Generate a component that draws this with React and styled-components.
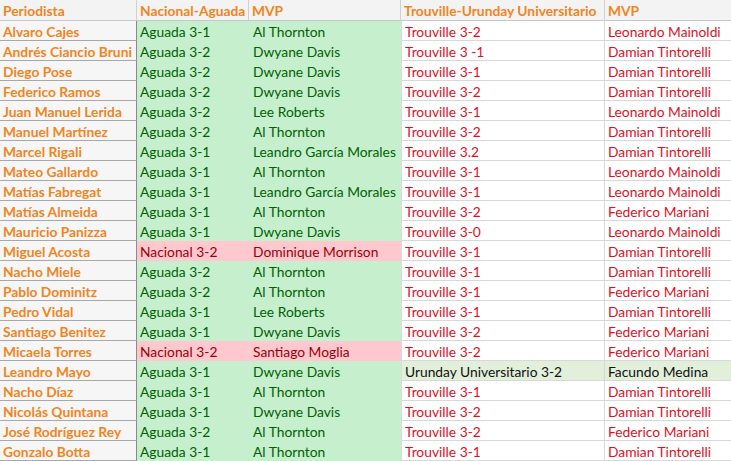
import styled, { createGlobalStyle } from 'styled-components';

const GlobalStyle = createGlobalStyle`
  html, body {
    margin: 0;
    padding: 0;
    background: #ffffff;
  }
  body {
    font-family: Lato, 'Open Sans', 'Liberation Sans', sans-serif;
  }
`;

const Sheet = styled.div`
  display: grid;
  grid-template-columns: 137px 112px 152px 204px 126px;
  grid-template-rows: 21px;
  grid-auto-rows: 20px;
  width: 731px;
  font-size: 13.8px;
`;

const Cell = styled.div`
  display: flex;
  align-items: center;
  padding-left: ${(props) => props.$pad || 3}px;
  padding-top: 1px;
  white-space: nowrap;
  overflow: hidden;
  box-sizing: border-box;
`;

const HeadCell = styled(Cell)`
  background: #f3f3f3;
  color: #f2841c;
  font-weight: 700;
  border-bottom: 1px solid #c8c8c8;
  border-right: ${(props) => (props.$last ? 'none' : '1px solid #d0d0d0')};
`;

const NameCell = styled(Cell)`
  background: #f6f6f6;
  color: #f2841c;
  font-weight: 700;
  border-bottom: 1px solid #a8a8a8;
  border-right: 1px solid #8a8a8a;
`;

const ResultCell = styled(Cell)`
  background: ${(props) => (props.$lost ? '#ffc7ce' : '#c6efce')};
  color: ${(props) => (props.$lost ? '#9c0006' : '#006100')};
`;

const TrouCell = styled(Cell)`
  background: ${(props) => (props.$win ? '#e2efda' : '#ffffff')};
  color: ${(props) => (props.$win ? '#111111' : '#e0101e')};
  border-bottom: 1px solid #d8d8d8;
  border-left: ${(props) => (props.$first ? '1px solid #dadada' : 'none')};
  border-right: ${(props) => (props.$first ? '1px solid #d8d8d8' : 'none')};
`;

const rows = [
  ['Alvaro Cajes', 'Aguada 3-1', 'Al Thornton', 'Trouville 3-2', 'Leonardo Mainoldi'],
  ['Andrés Ciancio Bruni', 'Aguada 3-2', 'Dwyane Davis', 'Trouville 3 -1', 'Damian Tintorelli'],
  ['Diego Pose', 'Aguada 3-2', 'Dwyane Davis', 'Trouville 3-1', 'Damian Tintorelli'],
  ['Federico Ramos', 'Aguada 3-2', 'Dwyane Davis', 'Trouville 3-2', 'Damian Tintorelli'],
  ['Juan Manuel Lerida', 'Aguada 3-2', 'Lee Roberts', 'Trouville 3-1', 'Leonardo Mainoldi'],
  ['Manuel Martínez', 'Aguada 3-2', 'Al Thornton', 'Trouville 3-2', 'Damian Tintorelli'],
  ['Marcel Rigali', 'Aguada 3-1', 'Leandro García Morales', 'Trouville 3.2', 'Damian Tintorelli'],
  ['Mateo Gallardo', 'Aguada 3-1', 'Al Thornton', 'Trouville 3-1', 'Leonardo Mainoldi'],
  ['Matías Fabregat', 'Aguada 3-1', 'Leandro García Morales', 'Trouville 3-1', 'Leonardo Mainoldi'],
  ['Matías Almeida', 'Aguada 3-1', 'Al Thornton', 'Trouville 3-2', 'Federico Mariani'],
  ['Mauricio Panizza', 'Aguada 3-1', 'Dwyane Davis', 'Trouville 3-0', 'Leonardo Mainoldi'],
  ['Miguel Acosta', 'Nacional 3-2', 'Dominique Morrison', 'Trouville 3-1', 'Damian Tintorelli'],
  ['Nacho Miele', 'Aguada 3-2', 'Al Thornton', 'Trouville 3-1', 'Damian Tintorelli'],
  ['Pablo Dominitz', 'Aguada 3-2', 'Al Thornton', 'Trouville 3-1', 'Federico Mariani'],
  ['Pedro Vidal', 'Aguada 3-1', 'Lee Roberts', 'Trouville 3-1', 'Damian Tintorelli'],
  ['Santiago Benitez', 'Aguada 3-1', 'Dwyane Davis', 'Trouville 3-2', 'Federico Mariani'],
  ['Micaela Torres', 'Nacional 3-2', 'Santiago Moglia', 'Trouville 3-2', 'Federico Mariani'],
  ['Leandro Mayo', 'Aguada 3-1', 'Dwyane Davis', 'Urunday Universitario 3-2', 'Facundo Medina'],
  ['Nacho Díaz', 'Aguada 3-1', 'Al Thornton', 'Trouville 3-1', 'Damian Tintorelli'],
  ['Nicolás Quintana', 'Aguada 3-1', 'Dwyane Davis', 'Trouville 3-2', 'Damian Tintorelli'],
  ['José Rodríguez Rey', 'Aguada 3-2', 'Al Thornton', 'Trouville 3-2', 'Federico Mariani'],
  ['Gonzalo Botta', 'Aguada 3-1', 'Al Thornton', 'Trouville 3-1', 'Damian Tintorelli'],
];

export default function App() {
  return (
    <>
      <GlobalStyle />
      <Sheet>
        <HeadCell>Periodista</HeadCell>
        <HeadCell>Nacional-Aguada</HeadCell>
        <HeadCell>MVP</HeadCell>
        <HeadCell>Trouville-Urunday Universitario</HeadCell>
        <HeadCell $last>MVP</HeadCell>
        {rows.map(([name, result, mvp, trou, trouMvp]) => {
          const lost = result.startsWith('Nacional');
          const win = trou.startsWith('Urunday');
          return [
            <NameCell key={name + '-n'}>{name}</NameCell>,
            <ResultCell key={name + '-r'} $lost={lost}>{result}</ResultCell>,
            <ResultCell key={name + '-m'} $lost={lost} $pad={4}>{mvp}</ResultCell>,
            <TrouCell key={name + '-t'} $win={win} $first>{trou}</TrouCell>,
            <TrouCell key={name + '-v'} $win={win}>{trouMvp}</TrouCell>,
          ];
        })}
      </Sheet>
    </>
  );
}
